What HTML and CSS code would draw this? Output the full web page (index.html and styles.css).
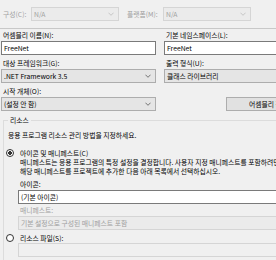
FILE: index.html
```html
<!DOCTYPE html>
<html>
<head>
    <meta charset="utf-8">
    <title>응용 프로그램</title>
    <link rel="stylesheet" href="styles.css">
</head>
<body>
    <div class="topbar">
        <span class="toplabel dim">구성(C):</span>
        <div class="combo off cfg"><span>N/A</span><svg class="chev" viewBox="0 0 7 4"><polyline points="0.5,0.5 3.5,3.5 6.5,0.5"/></svg></div>
        <span class="toplabel dim plat">플랫폼(M):</span>
        <div class="combo off cfg"><span>N/A</span><svg class="chev" viewBox="0 0 7 4"><polyline points="0.5,0.5 3.5,3.5 6.5,0.5"/></svg></div>
    </div>
    <div class="sep"></div>

    <div class="fields">
        <div class="field">
            <label>어셈블리 이름(N):</label>
            <div class="textbox">FreeNet</div>
        </div>
        <div class="field">
            <label>기본 네임스페이스(L):</label>
            <div class="textbox">FreeNet</div>
        </div>
        <div class="field">
            <label>대상 프레임워크(G):</label>
            <div class="combo"><span>.NET Framework 3.5</span><svg class="chev" viewBox="0 0 7 4"><polyline points="0.5,0.5 3.5,3.5 6.5,0.5"/></svg></div>
        </div>
        <div class="field">
            <label>출력 형식(U):</label>
            <div class="combo"><span>클래스 라이브러리</span><svg class="chev" viewBox="0 0 7 4"><polyline points="0.5,0.5 3.5,3.5 6.5,0.5"/></svg></div>
        </div>
        <div class="field">
            <label>시작 개체(O):</label>
            <div class="combo"><span>(설정 안 함)</span><svg class="chev" viewBox="0 0 7 4"><polyline points="0.5,0.5 3.5,3.5 6.5,0.5"/></svg></div>
        </div>
        <div class="field end">
            <button class="btn">어셈블리 정보...</button>
        </div>
    </div>

    <fieldset class="group">
        <legend>리소스</legend>
        <p class="hint">응용 프로그램 리소스 관리 방법을 지정하세요.</p>
        <div class="radio"><span class="dot on"></span>아이콘 및 매니페스트(C)</div>
        <div class="desc">
            <div>매니페스트는 응용 프로그램의 특정 설정을 결정합니다. 사용자 지정 매니페스트를 포함하려면 먼저</div>
            <div>해당 매니페스트를 프로젝트에 추가한 다음 아래 목록에서 선택하십시오.</div>
        </div>
        <div class="sub first">
            <label>아이콘:</label>
            <div class="textbox">(기본 아이콘)</div>
            <label class="dim">매니페스트:</label>
            <div class="combo off"><span>기본 설정으로 구성된 매니페스트 포함</span></div>
        </div>
        <div class="radio"><span class="dot"></span>리소스 파일(S):</div>
        <div class="sub">
            <div class="textbox off"></div>
        </div>
    </fieldset>
</body>
</html>
```

FILE: styles.css
```css
body {
    margin: 0;
    width: 276px;
    height: 260px;
    overflow: hidden;
    background-color: #f0f0f0;
    color: #000;
    font-family: "Noto Sans CJK KR", sans-serif;
    font-size: 6.8px;
    line-height: 10px;
}

.dim {
    color: #a0a0a0;
}

/* top configuration bar */
.topbar {
    display: flex;
    align-items: center;
    height: 28px;
    padding-left: 3px;
}

.toplabel {
    width: 28px;
}

.toplabel.plat {
    width: 36px;
    margin-left: 8px;
}

.combo.cfg {
    width: 88px;
}

.sep {
    width: 300px;
    border-top: 1px solid #c8c8c8;
}

/* inputs */
.textbox,
.combo {
    box-sizing: border-box;
    height: 14px;
    border: 1px solid #7a7a7a;
    background-color: #fff;
    line-height: 12px;
    padding: 0 2px;
    white-space: nowrap;
    overflow: hidden;
}

.combo {
    display: flex;
    justify-content: space-between;
    align-items: center;
    border-color: #adadad;
    background-color: #e5e5e5;
}

.combo.off {
    border-color: #d5d5d5;
    background-color: #ebebeb;
    color: #a0a0a0;
}

.textbox.off {
    border-color: #d5d5d5;
    background-color: #f0f0f0;
}

.chev {
    width: 6px;
    height: 4px;
    margin-right: 2px;
    flex-shrink: 0;
    fill: none;
    stroke: #606060;
    stroke-width: 1;
}

.off .chev {
    stroke: #c0c0c0;
}

/* two column form */
.fields {
    display: grid;
    grid-template-columns: 155px 156px;
    column-gap: 8px;
    row-gap: 3px;
    padding: 1px 0 0 1px;
}

.field label {
    display: block;
    padding-left: 2px;
    margin-bottom: 1px;
}

.field.end {
    display: flex;
    align-items: flex-end;
}

.btn {
    width: 100px;
    height: 14px;
    margin-left: 62px;
    padding: 0 0 0 22px;
    border: 1px solid #adadad;
    background-color: #e1e1e1;
    font-family: inherit;
    font-size: 6.8px;
    line-height: 12px;
    text-align: left;
    white-space: nowrap;
    color: #000;
}

/* resources group */
.group {
    width: 300px;
    margin: 4px 0 0 3px;
    padding: 0 0 0 2px;
    border: 1px solid #dcdcdc;
}

.group legend {
    padding: 0 2px;
    margin-left: 2px;
}

.hint {
    margin: 5px 0 8px 0;
    padding-left: 2px;
}

.radio {
    display: flex;
    align-items: center;
    gap: 6px;
}

.dot {
    box-sizing: border-box;
    width: 8px;
    height: 8px;
    border: 1px solid #333;
    border-radius: 50%;
    background-color: #fff;
}

.dot.on {
    background: radial-gradient(circle, #333 1.6px, #fff 2px);
}

.desc {
    padding-left: 14px;
    line-height: 9px;
    white-space: nowrap;
}

.sub {
    padding-left: 12px;
    margin-bottom: 3px;
}

.sub.first {
    margin-top: 3px;
}

.sub label {
    display: block;
    padding-left: 2px;
    margin: 1px 0;
}

.sub .textbox,
.sub .combo {
    width: 280px;
}

.sub .combo {
    margin-bottom: 3px;
}
```
